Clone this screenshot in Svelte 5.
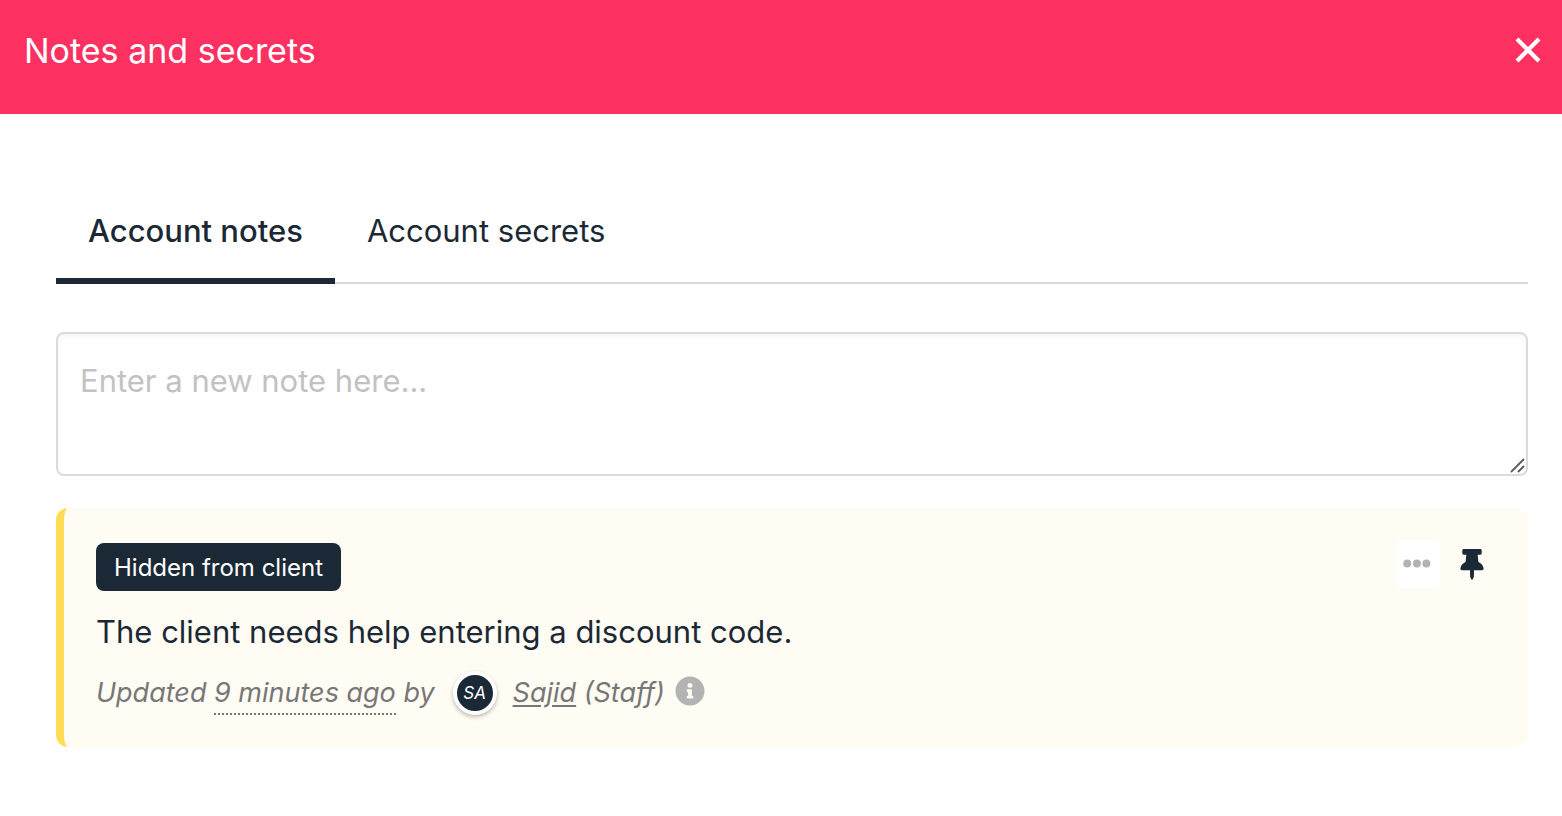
<script>
  let active = $state('notes');
  let note = $state('');
</script>

<div class="panel">
  <header>
    <h1>Notes and secrets</h1>
    <button class="close" aria-label="Close">
      <svg width="26" height="26" viewBox="0 0 26 26"><path d="M2 2 24 24M24 2 2 24" stroke="currentColor" stroke-width="4.2" /></svg>
    </button>
  </header>

  <main>
    <div class="tabs" role="tablist">
      <button role="tab" aria-selected={active === 'notes'} class:active={active === 'notes'} onclick={() => (active = 'notes')}>Account notes</button>
      <button role="tab" aria-selected={active === 'secrets'} class:active={active === 'secrets'} onclick={() => (active = 'secrets')}>Account secrets</button>
    </div>

    <div class="field">
      <textarea bind:value={note} aria-label="New note" placeholder="Enter a new note here..."></textarea>
      <svg class="grip" width="15" height="15" viewBox="0 0 15 15" aria-hidden="true"><path d="M1 14 14 1M8 14 14 8" stroke="#5c5c5c" stroke-width="1.8" /></svg>
    </div>

    <article>
      <div class="body">
        <span class="badge">Hidden from client</span>
        <p class="text">The client needs help entering a discount code.</p>
        <p class="meta">
          <span>Updated <span class="time">9 minutes ago</span> by</span>
          <span class="avatar">SA</span>
          <span><a href="#sajid">Sajid</a> (Staff)</span>
          <svg class="info" width="30" height="30" viewBox="0 0 512 512" role="img" aria-label="Information"><path fill="currentColor" d="M256 8C119.043 8 8 119.083 8 256c0 136.997 111.043 248 248 248s248-111.003 248-248C504 119.083 392.957 8 256 8zm0 110c23.196 0 42 18.804 42 42s-18.804 42-42 42-42-18.804-42-42 18.804-42 42-42zm56 254c0 6.627-5.373 12-12 12h-88c-6.627 0-12-5.373-12-12v-24c0-6.627 5.373-12 12-12h12v-64h-12c-6.627 0-12-5.373-12-12v-24c0-6.627 5.373-12 12-12h64c6.627 0 12 5.373 12 12v100h12c6.627 0 12 5.373 12 12v24z" /></svg>
        </p>
      </div>
      <div class="actions">
        <button class="more" aria-label="More options">
          <svg width="28" height="8" viewBox="0 0 28 8" fill="currentColor"><circle cx="4.2" cy="3.6" r="4" /><circle cx="13.9" cy="3.6" r="4" /><circle cx="23.4" cy="3.6" r="4" /></svg>
        </button>
        <button class="pin" aria-label="Unpin note">
          <svg width="24" height="31" viewBox="0 0 384 512"><path fill="currentColor" d="M298.028 214.267L285.793 96H328c13.255 0 24-10.745 24-24V24c0-13.255-10.745-24-24-24H56C42.745 0 32 10.745 32 24v48c0 13.255 10.745 24 24 24h42.207L85.972 214.267C37.465 236.82 0 277.261 0 328c0 13.255 10.745 24 24 24h136v104.007c0 1.242.289 2.467.845 3.578l24 48c2.941 5.882 11.364 5.893 14.311 0l24-48a8.008 8.008 0 0 0 .845-3.578V352h136c13.255 0 24-10.745 24-24-.001-51.183-37.983-91.42-85.973-113.733z" /></svg>
        </button>
      </div>
    </article>
  </main>
</div>

<style>
  :global(body) { margin: 0; background: #fff; }
  .panel { font-family: Inter, sans-serif; color: #1b2936; }
  header { display: flex; justify-content: space-between; align-items: flex-start; padding: 30px 21px 42px 24px; background: #fc3162; color: #fff; }
  h1 { margin: 0; font-size: 34px; line-height: 42px; font-weight: 400; }
  button { border: 0; padding: 0; background: none; font: inherit; color: inherit; cursor: pointer; }
  svg { display: block; overflow: visible; }
  .close { padding-top: 7px; }
  main { padding: 84px 34px 56px 56px; }
  .tabs { display: flex; border-bottom: 2px solid #d9d9d9; }
  .tabs button { margin-bottom: -2px; padding: 8px 32px 22px; border-bottom: 6px solid transparent; font-size: 31px; line-height: 50px; }
  .tabs .active { font-weight: 500; border-color: #1b2936; }
  .field { position: relative; margin-top: 48px; }
  textarea { display: block; box-sizing: border-box; width: 100%; height: 144px; padding: 23px 22px; border: 2px solid #dbdbdb; border-radius: 8px; box-shadow: inset 0 2px 4px #0000000d; background: #fff; color: inherit; font: 400 31px/48px Inter, sans-serif; resize: vertical; }
  textarea::-webkit-resizer { background: transparent; }
  textarea::placeholder { color: #c2c2c2; opacity: 1; }
  .grip { position: absolute; right: 3px; bottom: 3px; pointer-events: none; }
  article { display: flex; justify-content: space-between; margin-top: 32px; padding: 32px 44px 32px 32px; border-left: 8px solid #ffdc54; border-radius: 12px; background: #fffcf3; }
  .badge { display: inline-block; margin-top: 3px; padding: 1px 18px 0; border-radius: 8px; background: #1b2936; color: #fff; font-size: 24px; line-height: 47px; }
  p { margin: 0; }
  .text { margin-top: 16px; font-size: 31px; line-height: 50px; }
  .meta { display: flex; align-items: center; margin-top: 14px; font-size: 27px; line-height: 44px; font-style: italic; color: #777; }
  .time { padding-bottom: 4px; border-bottom: 2px dotted #777; }
  .avatar { box-sizing: border-box; width: 44px; height: 44px; margin: 0 16px 0 18px; border: 4px solid #fff; border-radius: 50%; background: #1b2936; box-shadow: 0 2px 4px #0004; color: #fff; font-size: 17px; line-height: 36px; text-align: center; }
  a { color: inherit; text-underline-offset: 3px; }
  .info { margin: 0 0 4px 10px; color: #b3b3b3; }
  .actions { display: flex; align-items: flex-start; gap: 20px; }
  .actions button { display: grid; place-items: center; height: 48px; }
  .more { width: 46px; border-radius: 8px; background: #fff; color: #b3b3b3; }
</style>
